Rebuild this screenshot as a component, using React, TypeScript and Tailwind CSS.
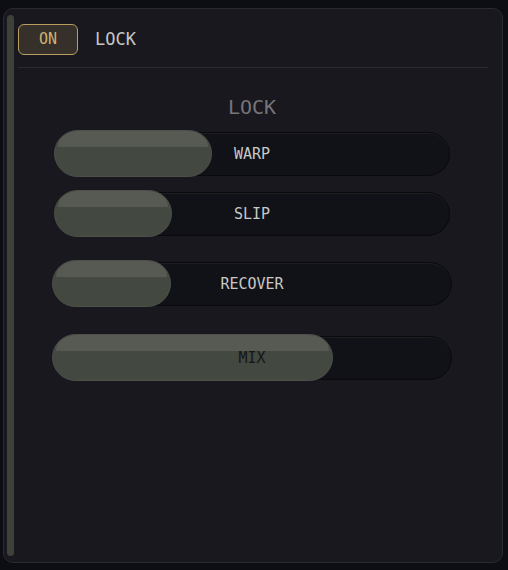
import { useState } from "react";

type Slider = {
  label: string;
  value: number;
  width: string;
  mt: string;
};

const sliders: Slider[] = [
  { label: "WARP", value: 40, width: "w-[396px]", mt: "mt-[13px]" },
  { label: "SLIP", value: 30, width: "w-[396px]", mt: "mt-[16px]" },
  { label: "RECOVER", value: 30, width: "w-[400px]", mt: "mt-[26px]" },
  { label: "MIX", value: 70.5, width: "w-[400px]", mt: "mt-[30px]" },
];

function SliderBar({ label, value, width, mt }: Slider) {
  const onThumb = value > 60;
  return (
    <div
      className={`relative h-[44px] ${width} ${mt} rounded-full bg-[#111217] border border-[#0a0a0c] shadow-[inset_0_1px_0_#1d1e22]`}
    >
      <div
        className="absolute left-[-1px] top-[-3px] bottom-[-2px] rounded-full bg-[#434840] border border-[#4c5049] overflow-hidden"
        style={{ width: `${value}%` }}
      >
        <div className="absolute left-[3px] right-[3px] top-0 h-[16px] rounded-t-full bg-[#565a53]" />
      </div>
      <div
        className={`relative flex h-full items-center justify-center text-[15px] ${
          onThumb ? "text-[#161715]" : "text-[#c8c8c8]"
        }`}
      >
        {label}
      </div>
    </div>
  );
}

export default function App() {
  const [on, setOn] = useState(true);

  return (
    <div
      className="min-h-screen bg-[#0d0e14] pt-[8px] pl-[3px] pr-[5px] pb-[7px]"
      style={{ fontFamily: '"DejaVu Sans Mono", monospace' }}
    >
      <div className="flex h-[555px] w-[500px] rounded-[10px] border border-[#2a2833] bg-[#19181e]">
        <div className="ml-[3px] my-[6px] w-[7px] rounded-full bg-[#3e4139]" />

        <div className="flex flex-1 flex-col pl-[4px] pr-[16px] pt-[15px]">
          <div className="flex h-[31px] items-center gap-[17px]">
            <button
              onClick={() => setOn(!on)}
              className="h-[31px] w-[60px] rounded-[6px] border border-[#b89c62] bg-[#35312a] text-[15px] text-[#d0b173]"
            >
              {on ? "ON" : "OFF"}
            </button>
            <span className="text-[17px] text-[#c6c6c8]">LOCK</span>
          </div>

          <div className="mt-[12px] mr-[-2px] h-px bg-[#2a2a2e]" />

          <div className="flex flex-col items-center">
            <h2 className="mt-[27px] text-[20px] leading-[24px] text-[#75757a]">LOCK</h2>
            {sliders.map((s) => (
              <SliderBar key={s.label} {...s} />
            ))}
          </div>
        </div>
      </div>
    </div>
  );
}
